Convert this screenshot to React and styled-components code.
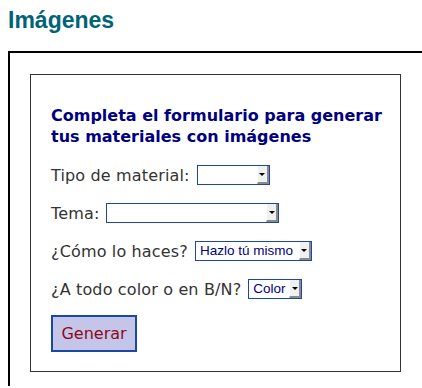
import React from "react";
import styled, {createGlobalStyle} from "styled-components";

const GlobalStyle = createGlobalStyle`
  html, body {
    margin: 0;
    padding: 0;
    background: #fff;
    overflow: hidden;
  }
`

const Page = styled.div`
  padding: 7px 0 0 8px;
  font-family: "DejaVu Sans", Verdana, sans-serif;
`

const Title = styled.h2`
  margin: 0 0 17px;
  font-family: "Liberation Sans", Arial, sans-serif;
  font-size: 23px;
  font-weight: bold;
  color: #006478;
`

const OuterBox = styled.div`
  border: 2px solid #000;
  border-right: none;
  border-bottom: none;
  padding: 21px 0 14px 20px;
`

const FormBox = styled.div`
  width: 339px;
  border: 1px solid #333;
  padding: 30px 10px 19px 20px;
`

const FormTitle = styled.h3`
  margin: 0 0 18px;
  font-size: 16px;
  line-height: 21px;
  font-weight: bold;
  color: #000080;
`

const Rows = styled.div`
  display: flex;
  flex-direction: column;
  gap: 18px;
  margin-bottom: 16px;
`

const Row = styled.div`
  display: flex;
  align-items: center;
  gap: 7px;
  height: 20px;
  font-size: 16px;
  letter-spacing: 0.15px;
  color: #333;
`

const Select = styled.div`
  box-sizing: border-box;
  display: flex;
  align-items: stretch;
  width: ${props => props.width}px;
  height: 20px;
  border: 1px solid #1a48a4;
  background: #fff;
  letter-spacing: 0;
`

const SelectText = styled.span`
  flex: 1;
  padding-left: 4px;
  font-family: "Liberation Sans", Arial, sans-serif;
  font-size: 13.5px;
  line-height: 18px;
  color: #000080;
  white-space: nowrap;
  overflow: hidden;
`

const ArrowButton = styled.span`
  box-sizing: border-box;
  width: 12px;
  margin: 0 0 0 1px;
  display: flex;
  align-items: center;
  justify-content: center;
  background: #f0f0f0;
  border-left: 1px solid #fff;
  border-right: 2px solid #8a8a8a;
  border-bottom: 2px solid #8a8a8a;

  &::after {
    content: "";
    width: 0;
    height: 0;
    border-left: 3px solid transparent;
    border-right: 3px solid transparent;
    border-top: 3px solid #000;
  }
`

const Button = styled.button`
  width: 86px;
  height: 37px;
  border: 2px solid #1a48a4;
  background: #c5c5ea;
  color: #8b0a1a;
  font-family: "DejaVu Sans", Verdana, sans-serif;
  font-size: 16px;
  padding: 0;
  cursor: pointer;
`

const FakeSelect = ({width, value}) => (
  <Select width={width}>
    <SelectText>{value}</SelectText>
    <ArrowButton/>
  </Select>
)

const App = () => {
  return (
    <>
      <GlobalStyle/>
      <Page>
        <Title>Imágenes</Title>
        <OuterBox>
          <FormBox>
            <FormTitle>Completa el formulario para generar tus materiales con imágenes</FormTitle>
            <Rows>
              <Row>Tipo de material: <FakeSelect width={73} value=""/></Row>
              <Row>Tema: <FakeSelect width={173} value=""/></Row>
              <Row>¿Cómo lo haces? <FakeSelect width={117} value="Hazlo tú mismo"/></Row>
              <Row>¿A todo color o en B/N? <FakeSelect width={54} value="Color"/></Row>
            </Rows>
            <Button>Generar</Button>
          </FormBox>
        </OuterBox>
      </Page>
    </>
  )
}

export default App
